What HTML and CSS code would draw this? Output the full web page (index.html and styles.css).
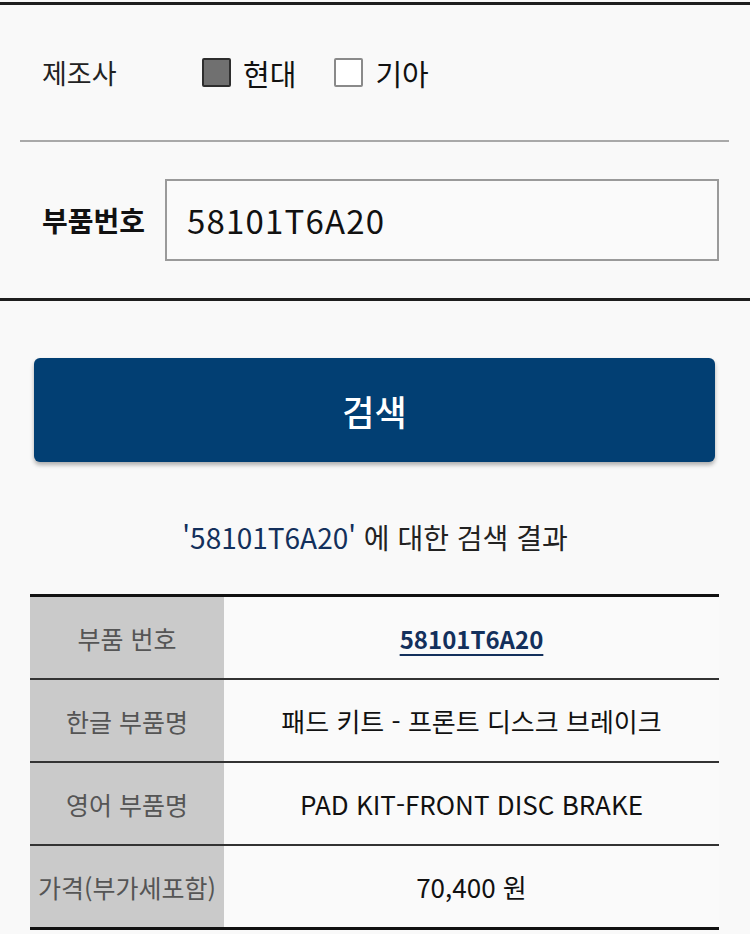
FILE: index.html
```html
<!DOCTYPE html>
<html lang="ko">
  <head>
    <meta charset="UTF-8" />
    <meta name="viewport" content="width=device-width, initial-scale=1.0" />
    <title>부품 검색</title>
    <link rel="stylesheet" href="styles.css">
  </head>
  <body>
    <div class="search-box">
      <div class="row maker-row">
        <span class="row-label maker-label">제조사</span>
        <label class="check">
          <span class="box checked"></span>
          <span>현대</span>
        </label>
        <label class="check">
          <span class="box"></span>
          <span>기아</span>
        </label>
      </div>
      <div class="divider"></div>
      <div class="row part-row">
        <span class="row-label part-label">부품번호</span>
        <input type="text" class="part-input" value="58101T6A20" />
      </div>
    </div>

    <button class="search-btn">검색</button>

    <p class="result-title"><span class="result-key">'58101T6A20'</span> 에 대한 검색 결과</p>

    <table class="result-table">
      <tr>
        <th>부품 번호</th>
        <td><a href="#" class="part-link">58101T6A20</a></td>
      </tr>
      <tr>
        <th>한글 부품명</th>
        <td>패드 키트 - 프론트 디스크 브레이크</td>
      </tr>
      <tr>
        <th>영어 부품명</th>
        <td>PAD KIT-FRONT DISC BRAKE</td>
      </tr>
      <tr>
        <th>가격(부가세포함)</th>
        <td>70,400 원</td>
      </tr>
    </table>
  </body>
</html>
```

FILE: styles.css
```css
body {
  font-family: "Noto Sans CJK KR", "Noto Sans", sans-serif;
  background-color: #f9f9f9;
  color: #111;
  margin: 0;
  padding-top: 2px;
}
.search-box {
  border-top: 3px solid #1e1e1e;
  border-bottom: 3px solid #1e1e1e;
}
.row {
  display: flex;
  align-items: center;
  padding-left: 42px;
}
.maker-row {
  height: 135px;
}
.part-row {
  height: 156px;
}
.divider {
  height: 2px;
  background-color: #a9a9a9;
  margin: 0 21px 0 20px;
}
.row-label {
  font-size: 27px;
  color: #222;
}
.maker-label {
  width: 160px;
}
.part-label {
  width: 123px;
  font-size: 28px;
  font-weight: bold;
  color: #111;
}
.check {
  display: flex;
  align-items: center;
  gap: 12px;
  font-size: 29px;
  color: #111;
  margin-right: 38px;
}
.box {
  width: 25px;
  height: 25px;
  border: 2px solid #8a8a8a;
  background-color: #fff;
  border-radius: 2px;
}
.box.checked {
  background-color: #707070;
  border-color: #2e2e2e;
}
.part-input {
  width: 554px;
  height: 82px;
  box-sizing: border-box;
  border: 2px solid #9a9a9a;
  background-color: #fafafa;
  padding: 0 20px;
  font-family: "Noto Sans CJK KR", "Noto Sans", sans-serif;
  font-size: 33px;
  color: #111;
  letter-spacing: 1.2px;
}
.search-btn {
  display: block;
  width: 681px;
  height: 104px;
  margin: 57px 0 0 34px;
  background-color: #023f73;
  color: #fff;
  border: none;
  border-radius: 6px;
  box-shadow: 0 3px 4px rgba(0, 0, 0, 0.3);
  font-family: "Noto Sans CJK KR", sans-serif;
  font-size: 35px;
  font-weight: 500;
  cursor: pointer;
}
.result-title {
  text-align: center;
  font-size: 28px;
  line-height: 40px;
  margin: 55px 0 37px;
  color: #222;
}
.result-key {
  color: #13305c;
}
.result-table {
  margin-left: 30px;
  width: 689px;
  border-collapse: collapse;
  border-top: 3px solid #111;
  border-bottom: 3px solid #111;
  font-size: 26px;
}
.result-table tr + tr {
  border-top: 2px solid #333;
}
.result-table th {
  width: 194px;
  height: 81px;
  background-color: #cacaca;
  color: #555;
  font-size: 25px;
  font-weight: normal;
  padding: 0;
}
.result-table td {
  text-align: center;
  background-color: #fafafa;
  color: #111;
  padding: 0;
}
.part-link {
  color: #13305c;
  font-size: 24px;
  font-weight: bold;
  text-underline-offset: 5px;
  text-decoration-thickness: 2px;
}
```
